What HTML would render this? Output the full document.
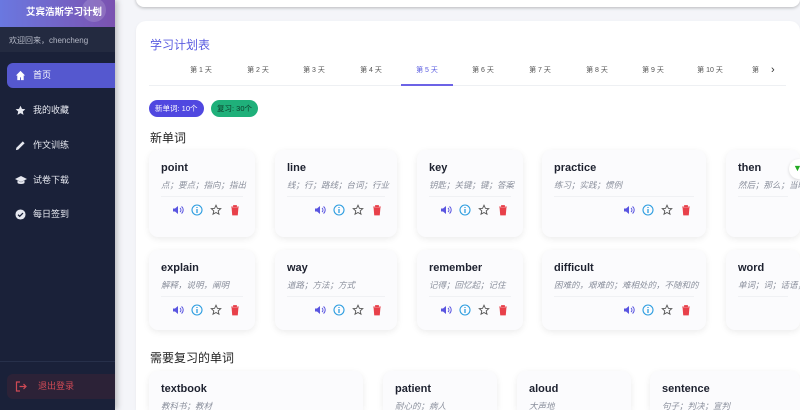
<!DOCTYPE html>
<html style="width:800px;height:410px;overflow:hidden"><head><meta charset="utf-8"><style>
*{box-sizing:border-box;margin:0;padding:0}
body{width:800px;height:410px;overflow:hidden;background:#f4f5f9;font-family:"Liberation Sans","Noto Sans CJK SC",sans-serif;position:relative}
.side{position:absolute;left:0;top:0;width:115px;height:410px;background:#1a2139;box-shadow:2px 0 6px rgba(0,0,0,.25);z-index:2}
.hdr{height:27px;background:linear-gradient(90deg,#6a78e0,#7b52b0);color:#fff;font-size:9.5px;font-weight:bold;padding:4px 0 0 26px;position:relative}
.hdr .c{position:absolute;left:82px;top:-2px;width:24px;height:24px;border-radius:50%;background:rgba(255,255,255,.15);font-size:12px;text-align:center;line-height:24px}
.wel{height:25px;background:#232a40;color:#b4b8c6;font-size:8px;padding:8px 0 0 9px}
.nav{position:absolute;left:7px;width:108px;height:25px;border-radius:6px 0 0 6px;color:#e6e8f0;font-size:9px;line-height:25px;padding-left:26px}
.nav.a{background:#5558cf;color:#fff}
.nav svg{position:absolute;left:8px;top:7px}
.sep{position:absolute;left:0;top:361px;width:115px;height:1px;background:#27304a}
.lo{position:absolute;left:7px;top:374px;width:108px;height:25px;border-radius:6px 0 0 6px;background:#2c2237;color:#d04a55;font-size:9px;line-height:25px;padding-left:31px}
.topc{position:absolute;left:136px;top:-10px;width:664px;height:17px;background:#fff;border-radius:8px;box-shadow:0 1px 3px rgba(0,0,0,.25)}
.main{position:absolute;left:136px;top:21px;width:664px;height:389px;background:#fff;border-radius:10px 10px 0 0;box-shadow:0 1px 3px rgba(0,0,0,.05)}
.t{position:absolute;font-size:12px;color:#5a5ce0;left:150px;top:36px}
.tab{position:absolute;top:65px;font-size:7px;color:#555;transform:translateX(-50%);white-space:nowrap}
.line{position:absolute;left:149px;top:85px;width:637px;height:1px;background:#eef0f3}
.ul{position:absolute;left:401px;top:84px;width:52px;height:2px;background:#6c63e6}
.pill{position:absolute;top:100px;height:17px;border-radius:9px;font-size:7.5px;line-height:17px;padding:0 6px}
h3{position:absolute;font-size:12px;font-weight:normal;color:#222;left:150px}
.card{position:absolute;background:#fbfbfd;border-radius:9px;box-shadow:0 2px 7px rgba(0,0,0,.08);overflow:hidden}
.card.r{border-radius:9px 9px 0 0}
.card b{position:absolute;left:12px;top:12px;font-size:11px;color:#1e2230}
.card i{position:absolute;left:12px;top:29px;font-size:8.5px;color:#8a8f9c;white-space:nowrap}
.card .hr{position:absolute;left:12px;right:12px;top:46px;height:1px;background:#f0f1f4}
.ic{position:absolute;top:54px;display:flex;gap:7px}
.ic svg{width:12px;height:12px}
</style></head><body>
<div class="side">
<div class="hdr">艾宾浩斯学习计划<div class="c">‹</div></div>
<div class="wel">欢迎回来，chencheng</div>
<div class="nav a" style="top:63px"><svg width="11" height="11" viewBox="0 0 12 12"><path d="M6 1L1 6h1.5v5h3V8h1v3h3V6H11z" fill="#fff"/></svg>首页</div>
<div class="nav" style="top:98px"><svg width="11" height="11" viewBox="0 0 12 12"><path d="M6 .8l1.6 3.4 3.7.4-2.8 2.5.8 3.7L6 8.9 2.7 10.8l.8-3.7L.7 4.6l3.7-.4z" fill="#e6e8f0"/></svg>我的收藏</div>
<div class="nav" style="top:133px"><svg width="11" height="11" viewBox="0 0 12 12"><path d="M1 11l.5-2.5L8.5 1.5l2 2-7 7z" fill="#e6e8f0"/></svg>作文训练</div>
<div class="nav" style="top:168px"><svg width="12" height="11" viewBox="0 0 12 11"><path d="M6 1L0 4l6 3 6-3zM2.5 5.5v2.5c1 1.3 6 1.3 7 0V5.5L6 7.3z" fill="#e6e8f0"/></svg>试卷下载</div>
<div class="nav" style="top:202px"><svg width="11" height="11" viewBox="0 0 12 12"><circle cx="6" cy="6" r="5.5" fill="#e6e8f0"/><path d="M3.3 6.2l1.8 1.8 3.6-3.6" stroke="#1a2139" stroke-width="1.4" fill="none"/></svg>每日签到</div>
<div class="sep"></div>
<div class="lo"><svg style="position:absolute;left:8px;top:7px" width="12" height="11" viewBox="0 0 12 11"><path d="M5 1H1.5v9H5M4.5 5.5H11M8.5 3l2.5 2.5L8.5 8" stroke="#d04a55" stroke-width="1.2" fill="none"/></svg>退出登录</div>
</div>
<div class="topc"></div>
<div class="main"></div>
<div class="t">学习计划表</div>
<div class="tab" style="left:201px">第 1 天</div><div class="tab" style="left:258px">第 2 天</div><div class="tab" style="left:314px">第 3 天</div><div class="tab" style="left:371px">第 4 天</div><div class="tab" style="left:427px;color:#5a5ce0">第 5 天</div><div class="tab" style="left:483px">第 6 天</div><div class="tab" style="left:540px">第 7 天</div><div class="tab" style="left:597px">第 8 天</div><div class="tab" style="left:653px">第 9 天</div><div class="tab" style="left:710px">第 10 天</div><div class="tab" style="left:757px;width:10px;overflow:hidden">第</div>
<div style="position:absolute;left:771px;top:64px;font-size:11px;color:#333">›</div>
<div class="line"></div><div class="ul"></div>
<div class="pill" style="left:149px;background:#5048e0;color:#fff">新单词: 10个</div>
<div class="pill" style="left:211px;background:#1fb07a;color:#0d3b2a">复习: 30个</div>
<h3 style="top:129px">新单词</h3>
<h3 style="top:349px">需要复习的单词</h3>
<div id="c"></div>
<script>
var ic='<div class="ic" style="right:14px"><svg viewBox="0 0 12 12"><path d="M1 4.5h2L6 2v8L3 7.5H1z" fill="#5a55e0"/><path d="M8 4a2.5 2.5 0 010 4M9.5 2.5a4.5 4.5 0 010 7" stroke="#5a55e0" fill="none"/></svg><svg viewBox="0 0 12 12"><circle cx="6" cy="6" r="5" stroke="#2d9de0" stroke-width="1.1" fill="none"/><path d="M6 5v4M6 3v1" stroke="#2d9de0" stroke-width="1.3"/></svg><svg viewBox="0 0 12 12"><path d="M6 1.2l1.4 3.1 3.4.3-2.6 2.3.8 3.3L6 8.5 3 10.2l.8-3.3L1.2 4.6l3.4-.3z" stroke="#555" stroke-width=".9" fill="none"/></svg><svg viewBox="0 0 12 12"><path d="M2 3h8M4.5 3V1.5h3V3M3 4h6l-.6 7H3.6z" fill="#e8404a" stroke="#e8404a" stroke-width=".8"/></svg></div>';
var d=[[149,150,106,87,'point','点；要点；指向；指出',1],[275,150,122,87,'line','线；行；路线；台词；行业',1],[417,150,106,87,'key','钥匙；关键；键；答案',1],[542,150,164,87,'practice','练习；实践；惯例',1],[726,150,74,87,'then','然后；那么；当时',0],
[149,250,106,80,'explain','解释，说明，阐明',1],[275,250,122,80,'way','道路；方法；方式',1],[417,250,106,80,'remember','记得；回忆起；记住',1],[542,250,164,80,'difficult','困难的，艰难的；难相处的，不随和的',1],[726,250,74,80,'word','单词；词；话语；',0],
[149,371,214,39,'textbook','教科书；教材',0],[383,371,114,39,'patient','耐心的；病人',0],[517,371,114,39,'aloud','大声地',0],[650,371,150,39,'sentence','句子；判决；宣判',0]];
var h='';d.forEach(function(c){h+='<div class="card'+(c[3]<50?' r':'')+'" style="left:'+c[0]+'px;top:'+c[1]+'px;width:'+c[2]+'px;height:'+c[3]+'px"><b>'+c[4]+'</b><i>'+c[5]+'</i>'+(c[3]<70?'':'<div class="hr"></div>')+(c[6]?ic:'')+'</div>';});
document.getElementById('c').innerHTML=h;
</script>
<div style="position:absolute;left:789px;top:159px;width:11px;height:20px;border-radius:10px 0 0 10px;background:#fff;box-shadow:0 1px 3px rgba(0,0,0,.15);color:#2a2;font-size:9px;padding:4px 0 0 4px;overflow:hidden">▼</div>
</body></html>
